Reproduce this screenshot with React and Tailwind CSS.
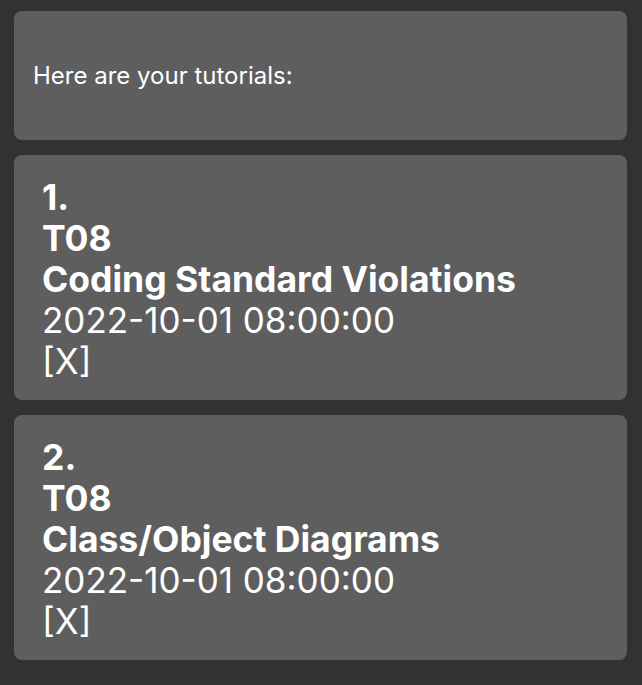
import React from 'react';

const tutorials = [
  { group: 'T08', title: 'Coding Standard Violations', time: '2022-10-01 08:00:00', done: 'X' },
  { group: 'T08', title: 'Class/Object Diagrams', time: '2022-10-01 08:00:00', done: 'X' },
];

const TutorialCard = ({ index, tutorial }) => (
  <div className="rounded-lg bg-[#5e5e5e] pl-[28px] pr-4 pt-[22px] pb-[18px] leading-[41px] text-white">
    <div className="text-[35.5px] font-bold">{index}.</div>
    <div className="text-[35.5px] font-bold">{tutorial.group}</div>
    <div className="text-[35.5px] font-bold">{tutorial.title}</div>
    <div className="text-[35px]">{tutorial.time}</div>
    <div className="text-[35px]">[{tutorial.done}]</div>
  </div>
);

export default function App() {
  return (
    <div
      className="min-h-screen bg-[#323232] pt-[11px] pl-[14px] pr-[15px] pb-6"
      style={{ fontFamily: 'Inter, "Noto Sans", sans-serif' }}
    >
      <div className="flex flex-col gap-[15px]">
        <div className="flex h-[129px] items-center rounded-lg bg-[#5e5e5e] pl-[19px]">
          <span className="text-[24px] text-white">Here are your tutorials:</span>
        </div>
        {tutorials.map((t, i) => (
          <TutorialCard key={i} index={i + 1} tutorial={t} />
        ))}
      </div>
    </div>
  );
}
